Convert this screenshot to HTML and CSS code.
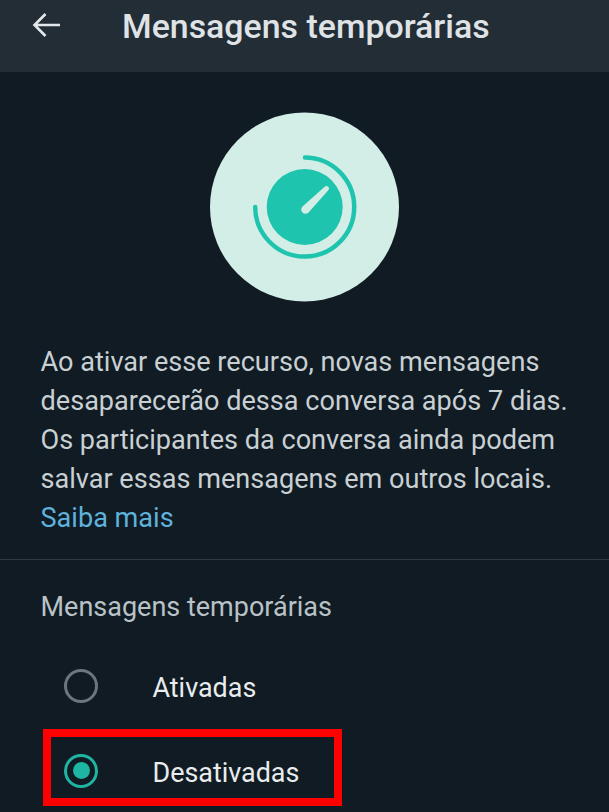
FILE: index.html
```html
<!DOCTYPE html>
<html lang="pt">
<head>
<meta charset="utf-8">
<title>Mensagens temporárias</title>
<link rel="stylesheet" href="styles.css">
</head>
<body>
<div class="screen">
  <header class="topbar">
    <svg class="back" width="30" height="28" viewBox="0 0 30 28" fill="none"><path d="M29 14H4M14.500 3 3.500 14l11 11" stroke="#e3e7ea" stroke-width="2.600"/></svg>
    <h1 class="title">Mensagens temporárias</h1>
  </header>
  <div class="hero">
    <svg class="hero-icon" width="190" height="190" viewBox="0 0 190 190" fill="none">
      <circle cx="94.500" cy="95" r="94.500" fill="#d3eee7"/>
      <circle cx="94.700" cy="95" r="38" fill="#1fc4ae"/>
      <path d="M95 45.500A49.500 49.500 0 1 1 45.200 95" stroke="#1fc4ae" stroke-width="4.500" stroke-linecap="round"/>
      <path d="M92.500 94.500 115 74.500a2.500 2.500 0 0 1 3.500 3.500L98.500 100.500a4 4 0 0 1-6-6Z" fill="#d3eee7"/>
    </svg>
  </div>
  <p class="desc">Ao ativar esse recurso, novas mensagens desaparecerão dessa conversa após 7 dias. Os participantes da conversa ainda podem salvar essas mensagens em outros locais. <a class="link" href="#">Saiba mais</a></p>
  <hr class="divider">
  <h2 class="section">Mensagens temporárias</h2>
  <div class="options">
    <div class="option"><span class="radio"></span><span class="label">Ativadas</span></div>
    <div class="option"><span class="radio on"></span><span class="label">Desativadas</span></div>
  </div>
  <div class="highlight"></div>
</div>
</body>
</html>
```
FILE: styles.css
```css
* { box-sizing: border-box; }
html, body { margin: 0; height: 100%; background: #101b23; overflow: hidden; }
body { font-family: Roboto, "Liberation Sans", sans-serif; }
.screen { position: relative; width: 609px; height: 812px; overflow: hidden; }
.topbar { height: 72px; background: #232d36; display: flex; align-items: flex-start; padding: 11px 0 0 31px; }
.back { flex: none; }
.title { margin: -4px 0 0 61px; font-size: 33.900px; line-height: 40px; font-weight: 500; color: #dfe3e6; white-space: nowrap; }
.hero { display: flex; justify-content: center; padding-top: 40px; }
.hero-icon { display: block; }
.desc { margin: 41px 0 0 40.500px; width: 540px; font-size: 27.100px; line-height: 39px; color: #c9d0d4; }
.link { color: #5fb2dc; text-decoration: none; display: block; }
.divider { margin: 21px 0 0; border: 0; height: 1px; background: #2f3a41; }
.section { margin: 27px 0 0 40.500px; font-size: 27px; line-height: 40px; font-weight: 400; color: #b9c2c7; }
.options { margin-top: 16px; }
.option { display: flex; align-items: center; height: 85px; padding-left: 64px; }
.radio { width: 34px; height: 34px; border-radius: 50%; border: 3.500px solid #6f767b; flex: none; position: relative; }
.radio.on { border-color: #1fb5a3; display: flex; align-items: center; justify-content: center; }
.radio.on::after { content: ""; width: 17px; height: 17px; border-radius: 50%; background: #1fb5a3; }
.label { margin: 5px 0 0 54.500px; font-size: 26.900px; color: #e8ecee; }
.highlight { position: absolute; left: 43px; top: 729px; width: 299px; height: 77px; border: 8px solid #fe0000; }
```
